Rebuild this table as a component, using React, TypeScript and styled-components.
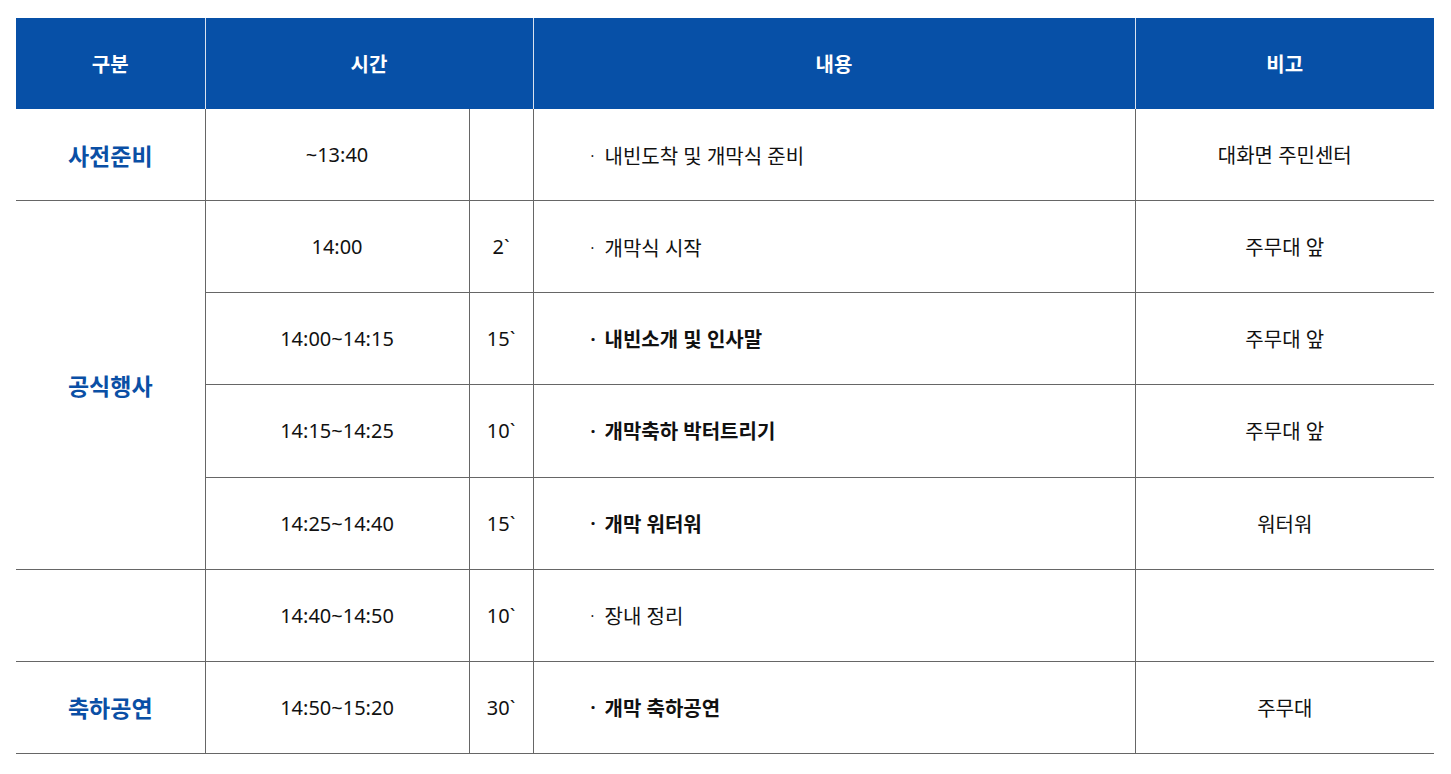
import React from 'react';
import styled, { createGlobalStyle } from 'styled-components';

const GlobalStyle = createGlobalStyle`
  body {
    margin: 0;
    background: #fff;
    font-family: "Noto Sans", "Noto Sans CJK KR", sans-serif;
    color: #111;
  }
`;

type Row = {
  category?: string;
  span?: number;
  time: string;
  minutes: string;
  content: string;
  strong?: boolean;
  note: string;
};

const rows: Row[] = [
  { category: '사전준비', time: '~13:40', minutes: '', content: '내빈도착 및 개막식 준비', note: '대화면 주민센터' },
  { category: '공식행사', span: 4, time: '14:00', minutes: '2`', content: '개막식 시작', note: '주무대 앞' },
  { time: '14:00~14:15', minutes: '15`', content: '내빈소개 및 인사말', strong: true, note: '주무대 앞' },
  { time: '14:15~14:25', minutes: '10`', content: '개막축하 박터트리기', strong: true, note: '주무대 앞' },
  { time: '14:25~14:40', minutes: '15`', content: '개막 워터워', strong: true, note: '워터워' },
  { category: '', time: '14:40~14:50', minutes: '10`', content: '장내 정리', note: '' },
  { category: '축하공연', time: '14:50~15:20', minutes: '30`', content: '개막 축하공연', strong: true, note: '주무대' },
];

const Page = styled.div`
  padding: 18px 17px 20px 16px;
`;

const Table = styled.table`
  width: 1418px;
  border-collapse: collapse;
  table-layout: fixed;
`;

const HeadCell = styled.th`
  height: 91px;
  padding: 0;
  background: #0750a7;
  color: #fff;
  font-size: 20px;
  font-weight: 700;
  text-align: center;
  vertical-align: middle;
  border-left: 1px solid #d9e2ef;

  &:first-child {
    border-left: none;
  }
`;

const Cell = styled.td<{ $align?: 'left' | 'center' }>`
  height: 91.15px;
  padding: 0;
  font-size: 20px;
  color: #111;
  text-align: ${(p) => p.$align ?? 'center'};
  vertical-align: middle;
  border-bottom: 1px solid #666;
  border-left: 1px solid #666;
`;

const CategoryCell = styled(Cell)`
  border-left: none;
  color: #0a4fa5;
  font-size: 23px;
  font-weight: 700;
`;

const ContentCell = styled(Cell)`
  padding-left: 57px;
`;

const Item = styled.span<{ $strong?: boolean }>`
  display: inline-flex;
  align-items: center;
  font-weight: ${(p) => (p.$strong ? 700 : 400)};
`;

const Bullet = styled.span<{ $strong?: boolean }>`
  width: 14px;
  font-weight: ${(p) => (p.$strong ? 700 : 400)};
  font-size: ${(p) => (p.$strong ? '18px' : '14px')};
`;

export default function App() {
  return (
    <Page>
      <GlobalStyle />
      <Table>
        <colgroup>
          <col style={{ width: 189 }} />
          <col style={{ width: 264 }} />
          <col style={{ width: 64 }} />
          <col style={{ width: 602 }} />
          <col style={{ width: 299 }} />
        </colgroup>
        <thead>
          <tr>
            <HeadCell>구분</HeadCell>
            <HeadCell colSpan={2}>시간</HeadCell>
            <HeadCell>내용</HeadCell>
            <HeadCell>비고</HeadCell>
          </tr>
        </thead>
        <tbody>
          {rows.map((r, i) => (
            <tr key={i}>
              {r.category !== undefined && <CategoryCell rowSpan={r.span ?? 1}>{r.category}</CategoryCell>}
              <Cell>{r.time}</Cell>
              <Cell>{r.minutes}</Cell>
              <ContentCell $align="left">
                <Item $strong={r.strong}>
                  <Bullet $strong={r.strong}>·</Bullet>
                  {r.content}
                </Item>
              </ContentCell>
              <Cell>{r.note}</Cell>
            </tr>
          ))}
        </tbody>
      </Table>
    </Page>
  );
}
